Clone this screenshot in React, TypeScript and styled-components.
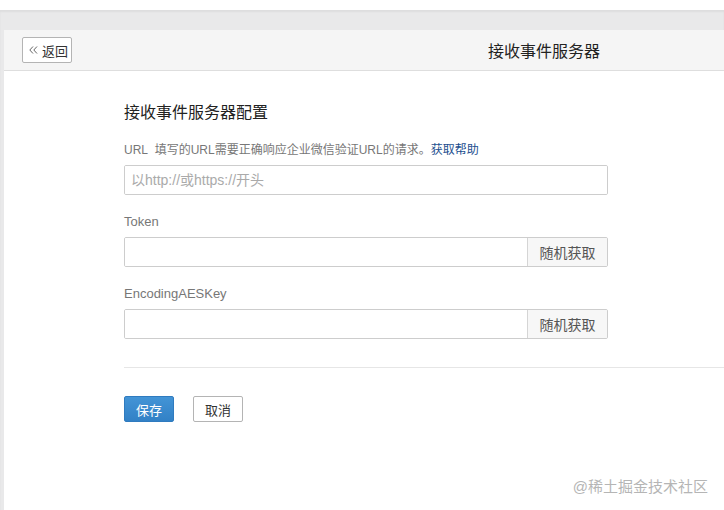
import styled, { createGlobalStyle } from 'styled-components';

const GlobalStyle = createGlobalStyle`
  html, body {
    margin: 0;
    padding: 0;
    background: #fff;
    overflow: hidden;
  }
  body {
    font-family: "Liberation Sans", "Noto Sans CJK SC", sans-serif;
    color: #222;
  }
`;

const App = () => {
  return (
    <>
      <GlobalStyle />
      <Page>
        <Backdrop>
          <Panel>
            <Header>
              <HeaderLeft>
                <BackButton>
                  <svg width="9" height="8" viewBox="0 0 9 8" fill="none" stroke="#666" strokeWidth="1">
                    <path d="M4 0.5 L0.8 4 L4 7.5" />
                    <path d="M8 0.5 L4.8 4 L8 7.5" />
                  </svg>
                  返回
                </BackButton>
              </HeaderLeft>
              <HeaderTitle>接收事件服务器</HeaderTitle>
              <div />
            </Header>
            <Body>
              <SectionTitle>接收事件服务器配置</SectionTitle>
              <Field>
                <Label>
                  URL&nbsp;&nbsp;填写的URL需要正确响应企业微信验证URL的请求。<HelpLink>获取帮助</HelpLink>
                </Label>
                <InputBox>
                  <Input placeholder="以http://或https://开头" />
                </InputBox>
              </Field>
              <Field>
                <Label $large>Token</Label>
                <InputBox>
                  <Input />
                  <Addon>随机获取</Addon>
                </InputBox>
              </Field>
              <Field>
                <Label $large>EncodingAESKey</Label>
                <InputBox>
                  <Input />
                  <Addon>随机获取</Addon>
                </InputBox>
              </Field>
              <Divider />
              <Actions>
                <Button $primary>保存</Button>
                <Button>取消</Button>
              </Actions>
            </Body>
          </Panel>
        </Backdrop>
        <Watermark>@稀土掘金技术社区</Watermark>
      </Page>
    </>
  );
};

export default App;

const Page = styled.div`
  position: relative;
  width: 724px;
  height: 510px;
  padding-top: 10px;
  box-sizing: border-box;
  overflow: hidden;
`;

const Backdrop = styled.div`
  height: 500px;
  background: #e9e9ea;
  padding: 20px 0 0 4px;
  box-sizing: border-box;
  box-shadow: inset 0 2px 2px rgba(0, 0, 0, 0.05);
`;

const Panel = styled.div`
  width: 1080px;
  height: 480px;
  background: #fff;
`;

const Header = styled.div`
  display: grid;
  grid-template-columns: 1fr auto 1fr;
  align-items: center;
  height: 40px;
  background: #f5f5f5;
  border-bottom: 1px solid #dedede;
`;

const HeaderLeft = styled.div`
  padding-left: 18px;
`;

const BackButton = styled.button`
  display: flex;
  align-items: center;
  gap: 4px;
  height: 26px;
  width: 50px;
  padding: 0 0 0 6px;
  box-sizing: border-box;
  background: #fff;
  border: 1px solid #b4b4b4;
  border-radius: 2px;
  font-family: inherit;
  font-size: 13px;
  color: #333;
`;

const HeaderTitle = styled.div`
  font-size: 16px;
  color: #222;
`;

const Body = styled.div`
  padding: 30px 120px 0;
`;

const SectionTitle = styled.div`
  font-size: 16px;
  line-height: 24px;
  color: #222;
  margin-bottom: 15px;
`;

const Field = styled.div`
  width: 484px;
  margin-bottom: 17px;
`;

const Label = styled.div<{ $large?: boolean }>`
  font-size: ${p => (p.$large ? '13px' : '12px')};
  line-height: 20px;
  color: #777;
  margin-bottom: 5px;
  white-space: nowrap;
`;

const HelpLink = styled.a`
  color: #1d4f8f;
  cursor: pointer;
`;

const InputBox = styled.div`
  display: flex;
  height: 30px;
  border: 1px solid #cdcdcd;
  border-radius: 2px;
  box-sizing: border-box;
  overflow: hidden;
`;

const Input = styled.input`
  flex: 1;
  min-width: 0;
  border: none;
  outline: none;
  padding: 0 6px;
  font-family: inherit;
  font-size: 14px;
  color: #333;
  background: #fff;

  &::placeholder {
    color: #aaa;
  }
`;

const Addon = styled.div`
  display: flex;
  align-items: center;
  justify-content: center;
  width: 79px;
  border-left: 1px solid #d5d5d5;
  background: #f7f7f7;
  font-size: 14px;
  color: #555;
`;

const Divider = styled.div`
  height: 1px;
  background: #e6e6e6;
  margin: 28px 0 28px;
`;

const Actions = styled.div`
  display: flex;
  gap: 19px;
`;

const Button = styled.button<{ $primary?: boolean }>`
  width: 50px;
  height: 26px;
  padding: 0;
  border-radius: 2px;
  font-family: inherit;
  font-size: 13px;
  border: 1px solid ${p => (p.$primary ? '#2f7bbf' : '#b4b4b4')};
  background: ${p => (p.$primary ? 'linear-gradient(#4394d6, #3281c6)' : '#fff')};
  color: ${p => (p.$primary ? '#fff' : '#333')};
`;

const Watermark = styled.div`
  position: absolute;
  right: 16px;
  bottom: 14px;
  font-size: 15px;
  color: #b5b5b5;
`;
